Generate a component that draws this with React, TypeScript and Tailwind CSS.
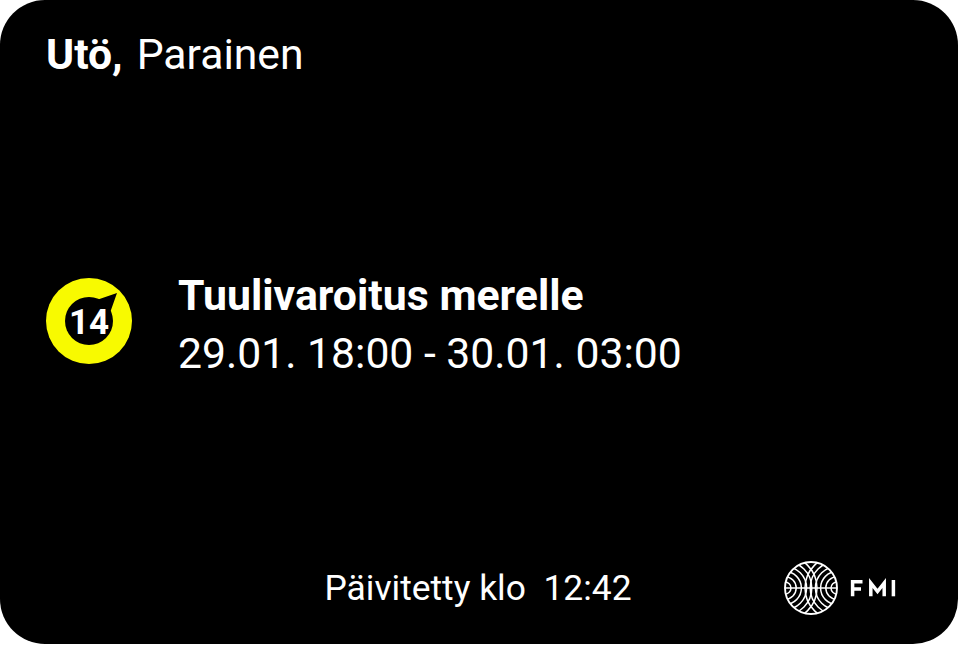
const ARC_RADII = [6, 11.2, 16.4, 21.6, 26.8, 32];

function WindWarningIcon() {
  return (
    <svg className="h-[86px] w-[86px] shrink-0" viewBox="0 0 86 86">
      <circle cx="43" cy="43" r="43" fill="#f8fa00" />
      <circle cx="43" cy="43" r="24" fill="#000" />
      <path d="M71 15 L53.5 21 Q50 21.8 46 20 L62 38 Q63.8 35 65 32 Z" fill="#000" />
      <text
        x="43"
        y="55.6"
        textAnchor="middle"
        fill="#fff"
        fontFamily="Roboto, sans-serif"
        fontSize="35"
        fontWeight="700"
      >
        14
      </text>
    </svg>
  );
}

function FmiLogo() {
  return (
    <svg className="h-[56px] w-[114px] shrink-0" viewBox="0 0 114 56" fill="none" stroke="#fff">
      <clipPath id="globe">
        <circle cx="28" cy="28" r="26" />
      </clipPath>
      <g clipPath="url(#globe)" strokeWidth="1.5">
        {ARC_RADII.map((r) => (
          <g key={r}>
            <circle cx="2" cy="28" r={r} />
            <circle cx="54" cy="28" r={r} />
          </g>
        ))}
        <path d="M2 28H54" />
      </g>
      <circle cx="28" cy="28" r="26" strokeWidth="1.9" />
      <g strokeWidth="3.5">
        <path d="M69.6 36.3V20M68 21.7H79.5M69.6 29H78" />
        <path d="M87.8 36.3V23L94.5 31.5L101.2 23V36.3" />
        <path d="M110.4 36.3V20" />
      </g>
    </svg>
  );
}

export default function App() {
  return (
    <div className="h-[646px] w-[958px] bg-white font-['Roboto',sans-serif] text-white">
      <main className="flex h-[644px] flex-col justify-between rounded-[45px] bg-black pt-[29px] pb-7">
        <h1 className="flex gap-[14px] pl-[46px] text-[42.7px] leading-[50px] font-normal">
          <span className="font-bold">Utö,</span>
          <span>Parainen</span>
        </h1>
        <section className="flex items-center gap-[46px] pt-0.5 pl-[46px]">
          <WindWarningIcon />
          <div className="pt-1.5 text-[42.7px] leading-[58px] whitespace-nowrap">
            <h2 className="text-[42.8px] font-bold">Tuulivaroitus merelle</h2>
            <p>29.01. 18:00 - 30.01. 03:00</p>
          </div>
        </section>
        <footer className="grid grid-cols-[1fr_auto_1fr] items-center">
          <p className="col-start-2 pr-0.5 text-[35.4px] leading-[42px] whitespace-pre">Päivitetty klo  12:42</p>
          <div className="flex justify-end pr-[61px]">
            <FmiLogo />
          </div>
        </footer>
      </main>
    </div>
  );
}
